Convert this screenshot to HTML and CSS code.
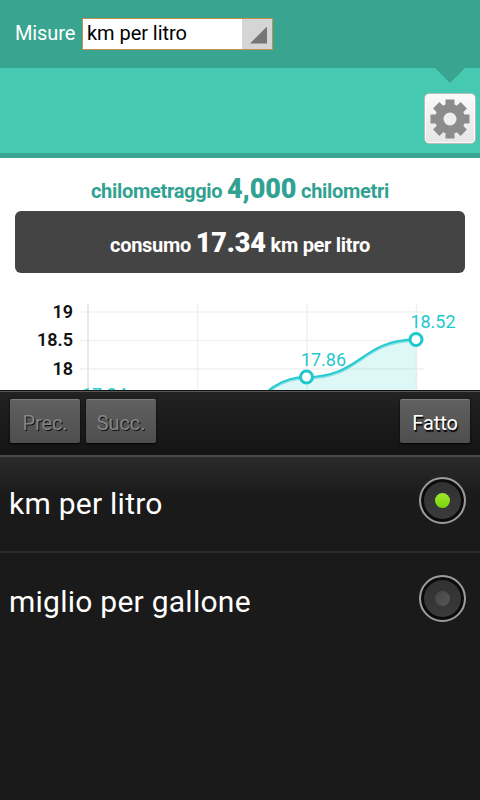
FILE: index.html
```html
<!DOCTYPE html>
<html lang="it">
<head>
  <meta charset="utf-8" />
  <meta name="viewport" content="width=device-width, initial-scale=1" />
  <title>Consumo</title>
  <link rel="stylesheet" href="styles.css">
</head>
<body>
  <main class="app">
    <header class="settings">
      <label for="units">Misure</label>
      <div class="select" id="units">
        <span class="select-value">km per litro</span>
        <span class="select-arrow"></span>
      </div>
    </header>

    <div class="toolbar">
      <span class="notch"></span>
      <button class="gear" aria-label="Impostazioni">
        <svg width="40" height="40" viewBox="-20 -20 40 40">
          <g fill="#8c8c8c">
            <circle r="15" />
            <rect x="-4.5" y="-19.5" width="9" height="39" />
            <rect x="-4.5" y="-19.5" width="9" height="39" transform="rotate(45)" />
            <rect x="-4.5" y="-19.5" width="9" height="39" transform="rotate(90)" />
            <rect x="-4.5" y="-19.5" width="9" height="39" transform="rotate(135)" />
          </g>
          <circle r="6.5" fill="#eeeeee" />
        </svg>
      </button>
    </div>

    <p class="distance">chilometraggio <strong>4,000</strong> chilometri</p>
    <p class="usage">consumo <strong>17.34</strong> km per litro</p>

    <svg class="chart" width="480" height="117" viewBox="0 273 480 117">
      <g class="grid">
        <path d="M80 312H424M80 340.5H424M80 369H424" />
        <path d="M197.5 304V390M307 304V390M416.5 304V390" />
        <path class="axis" d="M88 304V390" />
      </g>
      <path class="area" d="M88 406C142 406 142 437 197 437C252 437 252 377 306.500 377C361 377 361 339.500 416.500 339.500V437H88Z" />
      <path class="line-shade" d="M88 407.500C142 407.500 142 438.500 197 438.500C252 438.500 252 378.500 306.500 378.500C361 378.500 361 341 416 341" />
      <path class="line" d="M88 406C142 406 142 437 197 437C252 437 252 377 306.500 377C361 377 361 339.500 416 339.500" />
      <circle class="dot" cx="306.500" cy="377" r="6" />
      <circle class="dot" cx="416" cy="339.500" r="6" />
      <g class="tick">
        <text x="73" y="318">19</text>
        <text x="73" y="346">18.5</text>
        <text x="73" y="375">18</text>
        <text x="73" y="402.500">17.5</text>
      </g>
      <g class="value">
        <text x="104.500" y="400.500">17.34</text>
        <text x="323.500" y="366">17.86</text>
        <text x="433" y="328">18.52</text>
      </g>
    </svg>
  </main>

  <section class="picker">
    <div class="picker-bar">
      <button class="key" disabled>Prec.</button>
      <button class="key" disabled>Succ.</button>
      <button class="key done">Fatto</button>
    </div>
    <ul class="options">
      <li class="option">km per litro <span class="radio on"></span></li>
      <li class="option">miglio per gallone <span class="radio"></span></li>
    </ul>
  </section>
</body>
</html>
```

FILE: styles.css
```css
* {
  box-sizing: border-box;
}
body {
  margin: 0;
  height: 800px;
  overflow: hidden;
  font-family: Roboto, "Liberation Sans", sans-serif;
  background: #1a1a1a;
}
button {
  font-family: inherit;
  padding: 0;
  border: none;
}

/* page behind the picker */
.app {
  height: 390px;
  overflow: hidden;
  background: #fff;
}
.settings {
  display: flex;
  align-items: center;
  height: 68px;
  padding: 0 0 1px 15px;
  background: #39a591;
  color: #fff;
  font-size: 20px;
}
.settings label {
  width: 60px;
  margin-top: -2px;
  letter-spacing: -0.1px;
}
.select {
  display: flex;
  width: 191px;
  height: 32px;
  margin-left: 7px;
  border: 1px solid #c58f58;
  background: #fff;
  color: #000;
}
.select-value {
  flex: 1;
  padding-left: 4px;
  line-height: 29px;
  letter-spacing: -0.05px;
}
.select-arrow {
  width: 30px;
  background: #d5d5d5;
}
.select-arrow::before {
  content: "";
  display: block;
  width: 17px;
  height: 17px;
  margin: 8px 0 0 8px;
  background: #757575;
  clip-path: polygon(100% 0, 100% 100%, 0 100%);
}
.toolbar {
  position: relative;
  display: flex;
  justify-content: flex-end;
  height: 90px;
  padding: 25px 4px 0 0;
  background: #45c9b0;
  border-bottom: 5px solid #39a591;
}
.notch {
  position: absolute;
  top: 0;
  right: 15px;
  border: 15px solid transparent;
  border-top-color: #39a591;
  border-bottom: none;
}
.gear {
  display: flex;
  align-items: center;
  justify-content: center;
  width: 52px;
  height: 51px;
  border: 1px solid #b5bdbb;
  border-radius: 5px;
  background: linear-gradient(#fafafa, #e6e6e6);
  box-shadow: inset 0 0 0 1px #fafafa;
}
.distance,
.usage {
  margin: 0;
  text-align: center;
  font-size: 20px;
  font-weight: 700;
  letter-spacing: -0.3px;
}
.distance strong,
.usage strong {
  font-size: 27px;
  letter-spacing: -0.1px;
}
.distance {
  height: 53px;
  line-height: 63px;
  color: #31a291;
}
.usage {
  height: 62px;
  margin: 0 15px;
  line-height: 64px;
  border-radius: 6px;
  background: #444;
  color: #fff;
}

/* chart */
.chart {
  display: block;
}
.grid path {
  stroke: #f1f1f1;
  stroke-width: 1.5;
}
.grid .axis {
  stroke: #e9e9e9;
  stroke-width: 2;
}
.area {
  fill: #40d6cc;
  fill-opacity: 0.18;
}
.line,
.line-shade {
  fill: none;
  stroke: #25c9cf;
  stroke-width: 2;
}
.line-shade {
  stroke-opacity: 0.5;
}
.dot {
  fill: #fff;
  stroke: #1fc8ce;
  stroke-width: 3;
}
.tick text {
  font-size: 18px;
  font-weight: 600;
  text-anchor: end;
  fill: #111;
}
.value text {
  font-size: 18px;
  text-anchor: middle;
  fill: #1fc8ce;
}

/* picker */
.picker-bar {
  display: flex;
  gap: 6px;
  height: 67px;
  padding: 8px 10px 0;
  border-top: 1px solid #111;
  border-bottom: 2px solid #4b4b4b;
  background: linear-gradient(#222, #141414);
  box-shadow: inset 0 1px #585858;
}
.key {
  width: 70px;
  height: 44px;
  padding-top: 3px;
  border-top: 1px solid #7b7b7b;
  border-radius: 2px;
  background: linear-gradient(#606060, #4e4e4e);
  box-shadow: 0 1px 2px #000;
  color: #fff;
  font-size: 20px;
  letter-spacing: -0.1px;
  text-shadow: 1px 2px 1px #000;
}
.key:disabled {
  color: #858585;
  text-shadow: 1px 1px #111;
}
.done {
  margin-left: auto;
}
.options {
  margin: 0;
  padding: 0;
  list-style: none;
  background: linear-gradient(#2b2b2b, #1a1a1a 40px);
}
.option {
  display: flex;
  align-items: center;
  justify-content: space-between;
  height: 96px;
  padding: 0 14px 0 9px;
  color: #fff;
  font-size: 30px;
  letter-spacing: 0.25px;
}
.option:first-child {
  padding-bottom: 2px;
  border-bottom: 2px solid #2b2b2b;
}
.radio {
  display: flex;
  align-items: center;
  justify-content: center;
  width: 47px;
  height: 47px;
  margin-top: -5px;
  border: 2px solid #9c9c9c;
  border-radius: 50%;
  background: linear-gradient(#303030, #3b3b3b);
  box-shadow: inset 0 0 0 3px #0b0b0b;
}
.radio::before {
  content: "";
  width: 15px;
  height: 15px;
  border-radius: 50%;
  background: linear-gradient(135deg, #444, #575757);
}
.radio.on::before {
  background: linear-gradient(#a0e82f, #7bd30d);
}
```
